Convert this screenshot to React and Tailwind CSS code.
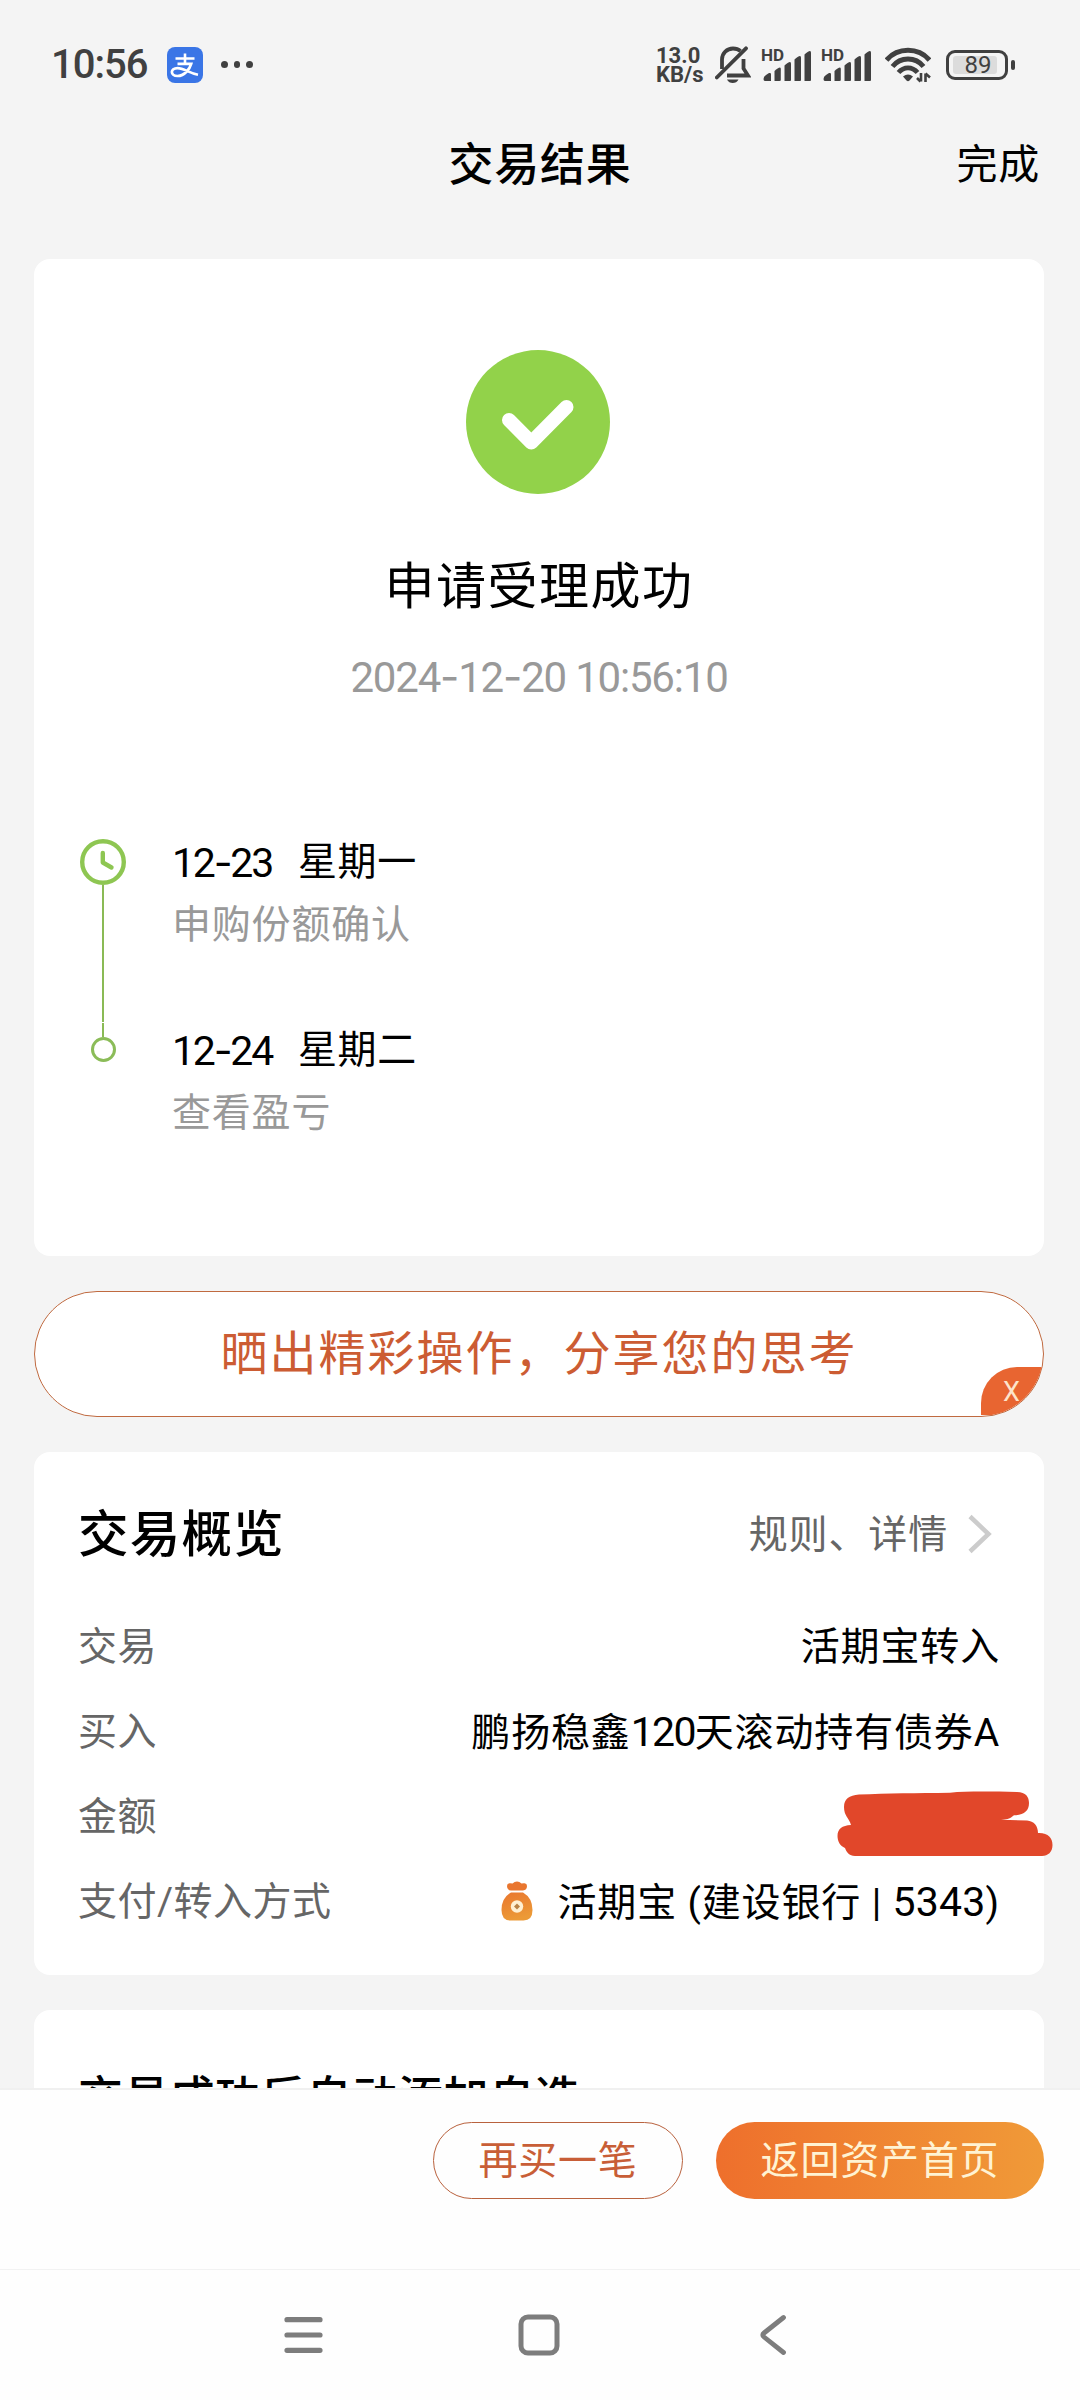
const FONT = "font-[Roboto,'Noto_Sans_CJK_SC',sans-serif]";

function AlipayIcon() {
  return (
    <svg className="ml-[19px] h-9 w-9" viewBox="0 0 36 36" fill="none">
      <rect width="36" height="36" rx="8" fill="#3a75e6" />
      <g stroke="#fff" strokeLinecap="butt">
        <path d="M8.5 11.5H27.5M18 6.5V17" strokeWidth="2.6" />
        <path d="M10.5 16.8H24.2C23 21 18 29 10.5 29C3 29 3 21.2 10.5 21.2C17 21.2 22 26 31 27.8" strokeWidth="2.7" />
      </g>
    </svg>
  );
}

function MutedBell() {
  return (
    <svg className="ml-[11px] h-[38px] w-9" viewBox="0 0 36 38" fill="none" stroke="#404040" strokeWidth="3.8">
      <path d="M7 23V13.500C7 7 12 2.500 18 2.500C21 2.500 23.500 3.300 25.500 5" />
      <path d="M1.800 31.500L31 2.300" strokeLinecap="round" />
      <path d="M28.500 13V22.500L33 29.500H12" />
      <path d="M12 33.500H23.500C22.500 36 20 37 17.700 37C15.500 37 13 36 12 33.500Z" fill="#404040" stroke="none" />
    </svg>
  );
}

function Signal() {
  return (
    <div className="relative h-[34px] w-[51px]">
      <span className="absolute -top-px left-0 text-[17px] leading-[16px] font-bold">HD</span>
      <svg className="absolute inset-0 h-[34px] w-[51px]" viewBox="0 0 51 34" fill="#404040">
        <path d="M2.500 31Q2.500 28.500 5 27L8 25Q10 24.500 10 26V33H4Q2.500 33 2.500 31Z" />
        <path d="M13.500 23Q17 19.500 19 19.500Q19.800 19.500 19.800 21V32Q19.800 33 18.500 33H13.500Z" />
        <path d="M23.500 17.500Q27 14 29 14Q30 14 30 15.500V32Q30 33 29 33H23.500Z" />
        <path d="M33.500 11.500Q37 8 39 8Q40 8 40 9.500V32Q40 33 39 33H33.500Z" />
        <path d="M43.500 6.500Q47 3 49 3Q50 3 50 4.500V32Q50 33 49 33H43.500Z" />
      </svg>
    </div>
  );
}

function Wifi() {
  return (
    <svg className="ml-[13px] h-9 w-[46px]" viewBox="0 0 46 36" fill="none" stroke="#404040">
      <path d="M1.500 13Q10 3.300 23 3.300Q36 3.300 44.500 13" strokeWidth="5" />
      <path d="M7.500 19.500Q13.500 12 23 12Q32.500 12 38.500 19.500" strokeWidth="4.800" />
      <path d="M13.500 25.500Q17.500 20.800 23 20.800Q28.500 20.800 32.500 25.500" strokeWidth="4.800" />
      <path d="M18 29.500Q23 25.500 28 29.500L24.500 33.500Q23 34.800 21.500 33.500Z" fill="#404040" stroke="none" />
      <path d="M36 26V34.500M32 31L35.500 34.500M40.500 35V26.500M40.500 26.500L45 30.500" strokeWidth="2.600" />
    </svg>
  );
}

function StatusBar() {
  return (
    <div className="flex h-[110px] items-center pt-[19px] pr-[65px] pl-[51px] text-[#404040]">
      <span className="w-[97px] text-[40px] leading-none font-medium tracking-[-1px]">10:56</span>
      <AlipayIcon />
      <div className="ml-[18px] flex gap-[6px]">
        <i className="h-[6.500px] w-[6.500px] rounded-full bg-[#404040]" />
        <i className="h-[6.500px] w-[6.500px] rounded-full bg-[#404040]" />
        <i className="h-[6.500px] w-[6.500px] rounded-full bg-[#404040]" />
      </div>
      <div className="ml-auto w-[48px] text-[22px] leading-[19px] font-bold whitespace-nowrap">
        <div>13.0</div>
        <div>KB/s</div>
      </div>
      <MutedBell />
      <div className="ml-[10px] flex gap-[9px]">
        <Signal />
        <Signal />
      </div>
      <Wifi />
      <div className="ml-[15px] flex items-center gap-[3px]">
        <div className="flex h-[30px] w-[62px] items-center rounded-[9px] border-[3px] border-[#404040] px-1">
          <span className="h-[18px] w-[44px] rounded-[3px] bg-[#dcdcdc] text-center text-[24px] leading-[19px]">
            <span className="ml-[6px]">89</span>
          </span>
        </div>
        <i className="h-[10px] w-1 rounded-[2px] bg-[#404040]" />
      </div>
    </div>
  );
}

function Hyphen() {
  return <span className="font-[Inter]">-</span>;
}

function TimelineItem({ month, date, day, note, children }) {
  return (
    <div className="flex h-[188px]">
      <div className="flex w-12 shrink-0 flex-col items-center">{children}</div>
      <div className="ml-[45px]">
        <div className="flex h-[46px] items-center pt-px text-[39px] tracking-[0.6px] text-black">
          <span className="w-[126px] text-[41px] tracking-[-2.2px]">
            {month}<Hyphen />{date}
          </span>
          <span>{day}</span>
        </div>
        <div className="mt-[17px] flex h-[46px] items-center text-[39px] tracking-[0.8px] text-[#999]">{note}</div>
      </div>
    </div>
  );
}

function Row({ label, children }) {
  return (
    <div className="flex h-[85px] items-center justify-between">
      <span className="tracking-[0.5px] text-[#666]">{label}</span>
      <span className="flex items-center text-black">{children}</span>
    </div>
  );
}

function MoneyBag() {
  return (
    <svg className="mr-6 mb-1 h-10 w-8" viewBox="0 0 32 40">
      <defs>
        <linearGradient id="bag" x1="0" y1="0" x2="0.3" y2="1">
          <stop offset="0" stopColor="#e9762f" />
          <stop offset="1" stopColor="#ec9a37" />
        </linearGradient>
      </defs>
      <path d="M10 9.500Q6 9 6 5Q6 2.500 8.500 2.200Q10 2 11.500 2.500Q13.500 0.500 16 0.500Q18.500 0.500 20.500 2.500Q22 2 23.500 2.200Q26 2.500 26 5Q26 9 22 9.500Z" fill="#e9762f" />
      <path d="M10 11.500H22Q31.500 17 31.500 29Q31.500 39.500 22.500 39.500H9.500Q0.500 39.500 0.500 29Q0.500 17 10 11.500Z" fill="url(#bag)" />
      <circle cx="16" cy="25.500" r="6.200" fill="#fff0d2" />
      <path d="M16 22.500L19 25.500L16 28.500L13 25.500Z" fill="#b98347" />
    </svg>
  );
}

function Scribble() {
  return (
    <svg className="absolute top-[16px] -right-[53px] h-[66px] w-[216px]" viewBox="0 0 216 66">
      <path
        d="M7 16C7 8 12 4.500 22 3.600C50 2 80 2.200 113 1.700C130 0 155 .6 180 .9C189 1 192 6 192 12C192 20 187 24 177 24.300C173 27.500 172 28.500 164 28.800L190 29.500C197 30 201 35 201 42C211 41.500 215.500 47 215.500 54C215.500 61 211 65 205 65H18C12 65 9.500 61 8 57C3 55 0.500 50 .5 45C.5 38 5 34.500 14 34C12 27 7 25 7 16Z"
        fill="#e1472a"
      />
    </svg>
  );
}

export default function App() {
  return (
    <div className={`${FONT} flex h-[2400px] w-[1080px] flex-col overflow-hidden bg-[#f4f4f4] leading-none`}>
      <StatusBar />
      <header className="grid h-[149px] grid-cols-[1fr_auto_1fr] items-start px-10 pt-8">
        <span />
        <h1 className="text-[45px] leading-[48px] font-medium tracking-[0.8px] text-black">交易结果</h1>
        <span className="justify-self-end text-[41px] leading-[47px] tracking-[0.8px] text-black">完成</span>
      </header>

      <main className="flex h-[1829px] shrink-0 flex-col gap-[35px] overflow-hidden pr-9 pl-[34px]">
        <section className="flex h-[997px] shrink-0 flex-col items-center rounded-[16px] bg-white pt-[91px]">
          <svg className="mr-[2px] h-36 w-36" viewBox="0 0 144 144" fill="none">
            <circle cx="72" cy="72" r="72" fill="#92d24a" />
            <path d="M43 70L65.300 92.500L100.500 57" stroke="#fff" strokeWidth="14" strokeLinecap="round" strokeLinejoin="round" />
          </svg>
          <h2 className="mt-[63px] text-[50px] leading-[60px] font-normal tracking-[1.5px] text-black">申请受理成功</h2>
          <p className="mt-[36px] text-[42px] leading-[48px] tracking-[-1.2px] text-[#999]">
            2024<Hyphen />12<Hyphen />20 10:56:10
          </p>
          <div className="mt-[137px] w-full pl-[45px]">
            <TimelineItem month="12" date="23" day="星期一" note="申购份额确认">
              <svg className="h-[46px] w-[46px] shrink-0" viewBox="0 0 46 46" fill="none" stroke="#8ec652">
                <circle cx="23" cy="23" r="20.800" strokeWidth="4.400" />
                <path d="M22.800 14V23.500L31.500 28.500" strokeWidth="4.400" strokeLinecap="round" strokeLinejoin="round" />
              </svg>
              <i className="h-[137px] w-[2px] shrink-0 bg-[#8aba55]" />
              <i className="mt-px h-1 w-[2px] bg-[#8aba55]" />
            </TimelineItem>
            <TimelineItem month="12" date="24" day="星期二" note="查看盈亏">
              <i className="h-[10px] w-[2px] bg-[#8aba55]" />
              <i className="h-[25px] w-[25px] rounded-full border-[3px] border-[#8bbc58]" />
            </TimelineItem>
          </div>
        </section>

        <section className="relative flex h-[126px] shrink-0 items-center justify-center rounded-[63px] border border-[#c06a40] bg-white pb-px text-[47px] tracking-[2px] text-[#cc5c33]">
          晒出精彩操作，分享您的思考
          <div className="absolute inset-0 overflow-hidden rounded-[62px]">
            <div className="absolute right-0 bottom-px flex h-[48px] w-[62px] items-center rounded-tl-[36px] bg-[#e86531] pt-[2px] pl-[22px] text-[27px] tracking-normal text-[#fde3cb]">
              X
            </div>
          </div>
        </section>

        <section className="h-[523px] shrink-0 rounded-[16px] bg-white pr-11 pl-11 text-[39px] tracking-[0.85px]">
          <div className="flex h-[153px] items-center justify-between pt-[14px]">
            <h3 className="text-[50.500px] font-medium tracking-[1.200px] text-black">交易概览</h3>
            <div className="flex items-center pr-[8px] text-[#666]">
              规则、详情
              <svg className="mb-1 ml-[20px] h-10 w-6" viewBox="0 0 24 40" fill="none">
                <path d="M2 2.500L20.500 20L2 37.500" stroke="#ccc" strokeWidth="4.500" />
              </svg>
            </div>
          </div>
          <Row label="交易">活期宝转入</Row>
          <Row label="买入">
            <span>鹏扬稳鑫<span className="text-[41px] tracking-[-1.7px]">120</span>天滚动持有债券A</span>
          </Row>
          <div className="relative">
            <Row label="金额" />
            <Scribble />
          </div>
          <Row label="支付/转入方式">
            <MoneyBag />
            <span>活期宝 (建设银行 | <span className="text-[41px] tracking-[0.2px]">5343</span>)</span>
          </Row>
        </section>

        <section className="h-[300px] shrink-0 rounded-[16px] bg-white px-11 pt-[65px]">
          <h3 className="text-[45px] leading-[48px] font-medium tracking-[0.7px] text-black">交易成功后自动添加自选</h3>
        </section>
      </main>

      <div className="flex h-[181px] shrink-0 items-start justify-end gap-[33px] border-t-2 border-[#f0f0f0] bg-[#fefefe] pt-8 pr-9 text-[39px] tracking-[0.8px]">
        <button className="h-[77px] w-[250px] rounded-full border border-[#b9623e] pt-px text-[#c85e37]">再买一笔</button>
        <button className="h-[77px] w-[328px] rounded-full bg-linear-to-r from-[#ee6f2c] to-[#f09a38] pt-px text-[#fff3d3]">返回资产首页</button>
      </div>

      <nav className="flex flex-1 justify-center gap-[193px] border-t border-[#f2f2f2] bg-[#fefefe] pt-[43px] pr-[2px]">
        <svg className="h-[44px] w-[42px]" viewBox="0 0 42 44" stroke="#7d7d7d" strokeWidth="5.200" strokeLinecap="round">
          <path d="M4 6.700H37M4 22H37M4 37.300H37" />
        </svg>
        <svg className="h-[44px] w-[42px]" viewBox="0 0 42 44" fill="none" stroke="#7d7d7d" strokeWidth="5">
          <rect x="3" y="4" width="36" height="36" rx="7" />
        </svg>
        <svg className="h-[44px] w-[42px]" viewBox="0 0 42 44" fill="none" stroke="#7d7d7d" strokeWidth="4.800" strokeLinecap="round" strokeLinejoin="round">
          <path d="M30.500 4.500L11 20Q8.500 22 11 24L30.500 39.500" />
        </svg>
      </nav>
    </div>
  );
}
